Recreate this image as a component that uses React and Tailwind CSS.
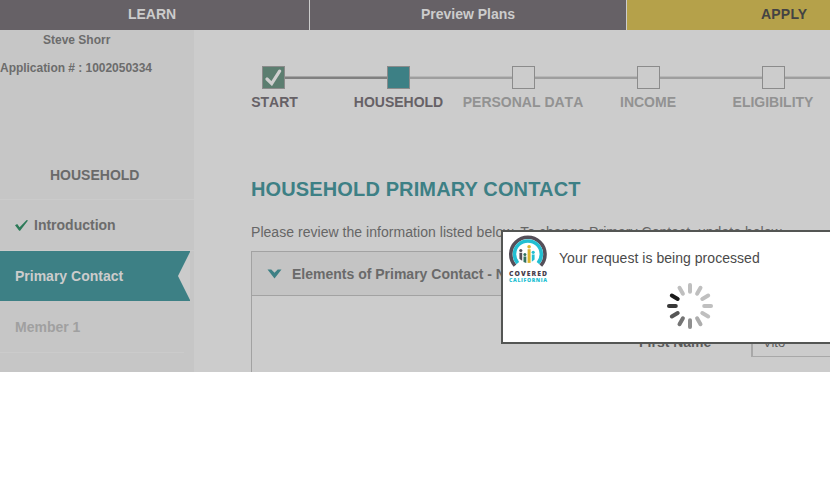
import React from 'react';

const steps = [
  { label: 'START', state: 'done' },
  { label: 'HOUSEHOLD', state: 'current' },
  { label: 'PERSONAL DATA', state: 'todo' },
  { label: 'INCOME', state: 'todo' },
  { label: 'ELIGIBILITY', state: 'todo' },
];

const spokes = ['#bfbfbf', '#bfbfbf', '#bfbfbf', '#bfbfbf', '#bfbfbf', '#adadad', '#8f8f8f', '#747474', '#565656', '#383838', '#1a1a1a', '#bfbfbf'];

function TopNav() {
  return (
    <nav className="flex h-[30px] bg-[#cccccc] text-sm leading-[29px] font-bold text-[#cccccc]">
      <div className="w-[309px] shrink-0 bg-[#666166] pr-[5px] text-center">LEARN</div>
      <div className="ml-px w-[316px] shrink-0 bg-[#666166] text-center">Preview Plans</div>
      <div className="ml-px flex-1 bg-[#b5a14a] pl-[134px] tracking-[0.2px] text-[#434343]">APPLY</div>
    </nav>
  );
}

function Sidebar() {
  return (
    <aside className="w-[194px] shrink-0 bg-[#c6c6c6] font-bold whitespace-nowrap">
      <div className="h-[119px] text-xs text-[#6c6c6c]">
        <p className="h-[28px] pl-[43px] leading-[20px]">Steve Shorr</p>
        <p className="leading-[20px] tracking-[-0.03px]">Application # : 1002050334</p>
      </div>
      <h3 className="h-[51px] border-b border-[#cbcbcb] pl-[50px] text-sm leading-[52px] text-[#6a6a6a]">HOUSEHOLD</h3>
      <ul className="text-sm">
        <li className="flex h-[51px] items-center border-b border-[#cbcbcb] pl-[15px] text-[#6c6c6c]">
          <svg width="13" height="11" viewBox="0 0 13 11" className="mr-[6px]">
            <path d="M0 5.2 2.2 4.1 4.6 7.2 11.7 0 13 .5 5.1 10.7 4.2 10.7Z" fill="#2c7a58" />
          </svg>
          Introduction
        </li>
        <li className="flex h-[50px] w-[190px] items-center bg-[#3d8085] pl-[15px] text-[#cccccc]">
          Primary Contact
          <svg width="12" height="50" viewBox="0 0 12 50" className="ml-auto">
            <path d="M12 1 0 25 12 49Z" fill="#cbcbcb" />
          </svg>
        </li>
        <li className="h-[52px] w-[184px] border-b border-[#cbcbcb] pl-[15px] leading-[52px] text-[#a0a0a0]">Member 1</li>
      </ul>
    </aside>
  );
}

function Rail({ dark, hidden }) {
  return (
    <span
      className={`h-[3px] flex-1 border-t ${
        hidden ? 'border-transparent' : dark ? 'border-[#a4a4a4] bg-[#808080]' : 'border-[#b8b8b8] bg-[#9e9e9e]'
      }`}
    />
  );
}

function Stepper() {
  return (
    <ol className="-ml-[40px] flex pt-9 text-sm font-bold [font-kerning:none]">
      {steps.map((s, i) => (
        <li key={s.label} className="w-[125px] shrink-0 text-center">
          <div className="flex h-[23px] items-center">
            <Rail hidden={i === 0} dark={i === 1} />
            <span
              className={`flex size-[23px] items-center justify-center border border-[#8b8b8b] ${
                s.state === 'done' ? 'bg-[#5c7e70]' : s.state === 'current' ? 'bg-[#3d8085]' : 'bg-[#cccccc]'
              }`}
            >
              {s.state === 'done' && (
                <svg width="17" height="17" viewBox="0 0 17 17" fill="none" stroke="#cfcfcf" strokeWidth="3.2" strokeLinecap="round">
                  <path d="M2 10 6.7 14.6 14.6 2.2" />
                </svg>
              )}
            </span>
            <Rail dark={i === 0} />
          </div>
          <p className={`mt-[3px] leading-5 ${s.state === 'todo' ? 'pr-px text-[#929292]' : s.state === 'done' ? 'pl-[2px] text-[#666166]' : 'text-[#666166]'}`}>
            {s.label}
          </p>
        </li>
      ))}
    </ol>
  );
}

function Logo() {
  return (
    <svg width="40" height="50" viewBox="0 0 40 50">
      <g fill="none">
        <path d="M7 31.6A17.1 17.1 0 1 1 32.8 31.6" stroke="#554f59" strokeWidth="3.6" />
        <path d="M9.8 29.1A13.4 13.4 0 1 1 30 29.1" stroke="#23bfd2" strokeWidth="3.5" />
      </g>
      <path d="M11.4 18.8h2.8v8q-1.8-.8-2.8-2z" fill="#554f59" />
      <path d="M15.5 22.5h2.8v6.4q-1.6-.2-2.8-.8z" fill="#34715f" />
      <path d="M19.6 15.2h3v13.7h-3z" fill="#dcb52d" />
      <path d="M23.8 20.6h2.8v5l-2.8 2.2z" fill="#23bfd2" />
      <circle cx="12.8" cy="16.5" r="1.6" fill="#554f59" />
      <circle cx="16.9" cy="20.4" r="1.5" fill="#34715f" />
      <circle cx="21.1" cy="12.8" r="1.8" fill="#dcb52d" />
      <circle cx="25.2" cy="18.3" r="1.6" fill="#23bfd2" />
      <text x="1" y="42.3" textLength="38" fontFamily="Open Sans, sans-serif" fontSize="6.8" fontWeight="800" fill="#48414c">COVERED</text>
      <text x="1" y="48.3" textLength="38" fontFamily="Open Sans, sans-serif" fontSize="5.2" fontWeight="800" fill="#23bfd2">CALIFORNIA</text>
    </svg>
  );
}

function Spinner() {
  return (
    <svg width="48" height="48" viewBox="-24 -24 48 48">
      {spokes.map((color, i) => (
        <line key={i} x1="0" y1="-21" x2="0" y2="-14.2" stroke={color} strokeWidth="4" strokeLinecap="round" transform={`rotate(${i * 30})`} />
      ))}
    </svg>
  );
}

function ProcessingDialog() {
  return (
    <div role="dialog" className="absolute top-[230px] left-[501px] h-[114px] w-[380px] border-2 border-[#545654] bg-white">
      <div className="flex pt-[2px] pl-[5px]">
        <Logo />
        <p className="pt-[14px] pl-[11px] text-sm tracking-[0.04px] text-[#4a4a4a]">Your request is being processed</p>
      </div>
      <div className="-mt-[2px] pl-[163px]">
        <Spinner />
      </div>
    </div>
  );
}

export default function App() {
  return (
    <div className="relative h-[480px] w-[830px] overflow-hidden bg-white font-['Liberation_Sans',Arial,sans-serif]">
      <div className="flex h-[372px] flex-col overflow-hidden bg-[#cccccc]">
        <TopNav />
        <div className="flex min-h-0 flex-1">
          <Sidebar />
          <main className="min-w-0 flex-1 overflow-hidden pl-[57px] whitespace-nowrap">
            <Stepper />
            <h1 className="mt-[62px] text-xl leading-[30px] font-bold tracking-[0.13px] text-[#3d8085]">HOUSEHOLD PRIMARY CONTACT</h1>
            <p className="mt-[18px] text-sm leading-5 tracking-[0.04px] text-[#666666]">
              Please review the information listed below. To change Primary Contact, update below.
            </p>
            <section className="mt-[9px] h-[200px] w-[620px] border border-[#a2a2a2]">
              <h2 className="flex h-[44px] items-center border-b border-[#a2a2a2] bg-[#c4c4c4] pl-[15px] text-sm font-bold text-[#6a6a6a]">
                <svg width="15" height="10" viewBox="0 0 15 10" className="mr-[10px]">
                  <path d="M.5 .4H4.3L7.500 3.8 10.700 .4H14.5L7.500 9.500Z" fill="#3d8085" />
                </svg>
                Elements of Primary Contact - N
              </h2>
              <div className="flex pt-[32px] pl-[387px] text-sm leading-[28px] text-[#5c5c5c]">
                <label className="w-[112px] shrink-0 font-bold">First Name</label>
                <div className="h-[29px] w-[160px] shrink-0 border border-l-2 border-[#a8a8a8] pl-[10px] text-[13px]">Vito</div>
              </div>
            </section>
          </main>
        </div>
      </div>
      <ProcessingDialog />
    </div>
  );
}
